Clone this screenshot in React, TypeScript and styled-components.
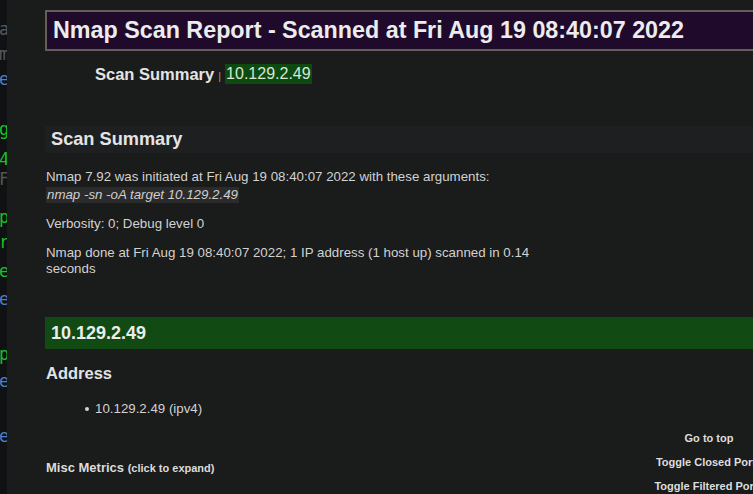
import React from "react";
import styled, { createGlobalStyle } from "styled-components";

const GlobalStyle = createGlobalStyle`
  html, body {
    margin: 0;
    padding: 0;
    background: #1a1b1b;
    overflow: hidden;
  }
  body {
    font-family: "Liberation Sans", Arial, sans-serif;
    color: #d4d4d4;
  }
`;

const Page = styled.div`
  display: flex;
  width: 753px;
  height: 494px;
  overflow: hidden;
  position: relative;
`;

// the window behind, only its right edge shows
const Strip = styled.div`
  width: 7px;
  flex-shrink: 0;
  background: #0f1112;
  overflow: hidden;
  display: flex;
  flex-direction: column;
`;

const StripChar = styled.div<{ $color: string; $top: number }>`
  margin-top: ${(p) => p.$top}px;
  height: 18px;
  line-height: 18px;
  font-family: "DejaVu Sans Mono", monospace;
  font-size: 17px;
  margin-left: -1px;
  color: ${(p) => p.$color};
`;

const Main = styled.main`
  flex-shrink: 0;
  width: 900px;
  padding-left: 38px;
  padding-top: 10px;
`;

const TitleBox = styled.h1`
  margin: 0;
  height: 37px;
  background: #200a2c;
  border: 2px solid #665c58;
  padding: 0 6px;
  display: flex;
  align-items: center;
  font-size: 23.3px;
  font-weight: bold;
  color: #ececec;
`;

const Nav = styled.div`
  display: flex;
  align-items: center;
  margin: 13px 0 0 50px;
  height: 20px;
`;

const NavLink = styled.span`
  font-size: 16.5px;
  font-weight: bold;
  color: #e4e4e4;
`;

const NavSep = styled.span`
  font-size: 11px;
  color: #9a9a9a;
  margin: 3px 4px 0;
`;

const NavIp = styled.span`
  font-size: 16px;
  color: #d8e6d4;
  background: #0c4a10;
  padding: 1px 1px;
`;

const SectionHead = styled.h2`
  margin: 42px 0 0;
  height: 27px;
  background: #1e1f20;
  padding-left: 6px;
  display: flex;
  align-items: center;
  font-size: 18.2px;
  font-weight: bold;
  color: #e4e4e4;
`;

const Body = styled.div`
  width: 495px;
  padding-top: 16px;
`;

const Para = styled.p`
  margin: 0 0 13px;
  padding-left: 1px;
  font-size: 13.3px;
  line-height: 16px;
  color: #d2d2d2;
`;

const Args = styled.span`
  display: inline-block;
  margin-top: 2px;
  font-style: italic;
  background: #2b2b2b;
  color: #cfcfcf;
  padding: 0 1px;
`;

const HostBar = styled.h2`
  margin: 40px 0 0;
  height: 32px;
  background: #114a12;
  padding-left: 6px;
  display: flex;
  align-items: center;
  font-size: 18px;
  font-weight: bold;
  color: #ececec;
`;

const SubHead = styled.h3`
  margin: 15px 0 0 1px;
  font-size: 16.5px;
  font-weight: bold;
  color: #e2e2e2;
`;

const List = styled.ul`
  margin: 18px 0 0;
  padding-left: 40px;
  font-size: 13.3px;
  line-height: 16px;
  color: #d2d2d2;
  list-style: none;
`;

const Item = styled.li`
  display: flex;
  align-items: center;
  gap: 6px;
  &::before {
    content: "";
    width: 4px;
    height: 4px;
    border-radius: 50%;
    background: #d2d2d2;
  }
`;

const Misc = styled.div`
  margin: 43px 0 0 1px;
  font-size: 13px;
  font-weight: bold;
  color: #dcdcdc;
`;

const MiscNote = styled.span`
  font-size: 11px;
`;

// floating page menu, partly past the right edge
const Menu = styled.nav`
  position: absolute;
  left: 640px;
  top: 430px;
  width: 138px;
  display: flex;
  flex-direction: column;
  align-items: center;
  gap: 8px;
`;

const MenuLink = styled.span`
  font-size: 11px;
  font-weight: bold;
  line-height: 16px;
  color: #dedede;
  white-space: nowrap;
`;

const stripChars = [
  { c: "a", color: "#5a5a5a", top: 20 },
  { c: "m", color: "#5a5a5a", top: 7 },
  { c: "e", color: "#4f7fc0", top: 7 },
  { c: "g", color: "#18c02a", top: 32 },
  { c: "4", color: "#18c02a", top: 12 },
  { c: "F", color: "#555555", top: 2 },
  { c: "p", color: "#18c02a", top: 20 },
  { c: "r", color: "#18c02a", top: 7 },
  { c: "e", color: "#18c02a", top: 11 },
  { c: "e", color: "#4f7fc0", top: 10 },
  { c: "p", color: "#18c02a", top: 37 },
  { c: "e", color: "#4f7fc0", top: 9 },
  { c: "e", color: "#4f7fc0", top: 37 },
];

const App: React.FC = () => {
  return (
    <>
      <GlobalStyle />
      <Page>
        <Strip>
          {stripChars.map((s, i) => (
            <StripChar key={i} $color={s.color} $top={s.top}>
              {s.c}
            </StripChar>
          ))}
        </Strip>
        <Main>
          <TitleBox>Nmap Scan Report - Scanned at Fri Aug 19 08:40:07 2022</TitleBox>
          <Nav>
            <NavLink>Scan Summary</NavLink>
            <NavSep>|</NavSep>
            <NavIp>10.129.2.49</NavIp>
          </Nav>
          <SectionHead>Scan Summary</SectionHead>
          <Body>
            <Para>
              Nmap 7.92 was initiated at Fri Aug 19 08:40:07 2022 with these arguments:
              <br />
              <Args>nmap -sn -oA target 10.129.2.49</Args>
            </Para>
            <Para>Verbosity: 0; Debug level 0</Para>
            <Para>
              Nmap done at Fri Aug 19 08:40:07 2022; 1 IP address (1 host up) scanned in 0.14 seconds
            </Para>
          </Body>
          <HostBar>10.129.2.49</HostBar>
          <SubHead>Address</SubHead>
          <List>
            <Item>10.129.2.49 (ipv4)</Item>
          </List>
          <Misc>
            Misc Metrics <MiscNote>(click to expand)</MiscNote>
          </Misc>
        </Main>
        <Menu>
          <MenuLink>Go to top</MenuLink>
          <MenuLink>Toggle Closed Ports</MenuLink>
          <MenuLink>Toggle Filtered Ports</MenuLink>
        </Menu>
      </Page>
    </>
  );
};

export default App;
